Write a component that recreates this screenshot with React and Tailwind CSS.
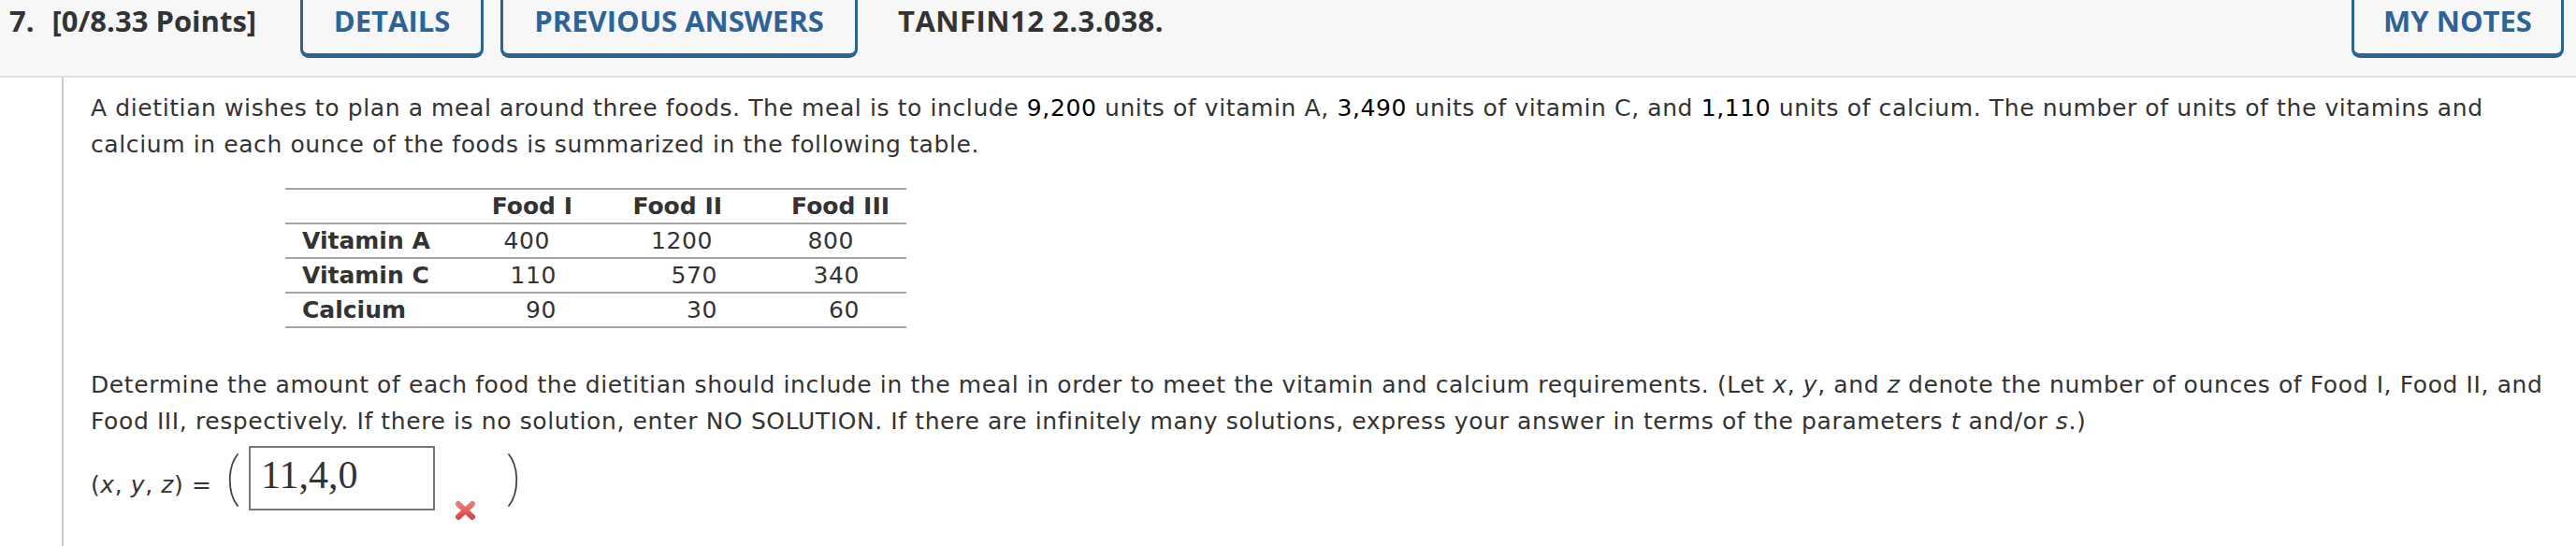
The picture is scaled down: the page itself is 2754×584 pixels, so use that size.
import React from 'react';

const rows = [
  { label: 'Vitamin A', values: ['400', '1200', '800'], pads: ['pr-[42px]', 'pr-[28px]', 'pr-[56px]'] },
  { label: 'Vitamin C', values: ['110', '570', '340'], pads: ['pr-[35px]', 'pr-[23px]', 'pr-[50px]'] },
  { label: 'Calcium', values: ['90', '30', '60'], pads: ['pr-[35px]', 'pr-[23px]', 'pr-[50px]'] },
];

const colWidths = ['w-[120px]', 'w-[160px]', 'w-[179px]'];

function TabButton({ children, width }) {
  return (
    <div
      className={`${width} h-[62px] shrink-0 border-x-[3px] border-b-[5px] border-t-0 border-[#2d6396] rounded-b-[9px] text-center text-[#2d6396] font-bold leading-[45px]`}
    >
      {children}
    </div>
  );
}

function Paren({ flip }) {
  // stretchy bracket, drawn
  return (
    <svg width="14" height="57" viewBox="0 0 14 57" className="shrink-0 mt-[8px]">
      <path
        d={flip ? 'M2 1 C 13 15, 13 42, 2 56' : 'M12 1 C 1 15, 1 42, 12 56'}
        fill="none"
        stroke="#444"
        strokeWidth="1.8"
        strokeLinecap="round"
      />
    </svg>
  );
}

function WrongMark() {
  return (
    <svg width="25" height="22" viewBox="0 0 25 22" className="shrink-0 mt-[58px]">
      <defs>
        <linearGradient id="xg" x1="0" y1="0" x2="0" y2="1">
          <stop offset="0" stopColor="#f07a7a" />
          <stop offset="1" stopColor="#d84848" />
        </linearGradient>
      </defs>
      <path d="M5 4 L20 18 M20 4 L5 18" stroke="url(#xg)" strokeWidth="6" strokeLinecap="round" />
    </svg>
  );
}

export default function App() {
  return (
    <div className="w-[2754px] h-[584px] bg-white overflow-hidden">
      {/* question header */}
      <div className="flex items-start h-[83px] bg-[#f7f7f7] border-b-2 border-[#e0e0e0] pl-[10px] pr-[13px] font-['Open_Sans',sans-serif] text-[31px] text-[#333]">
        <div className="flex w-[311px] shrink-0 font-bold leading-[45px]">
          <span>7.</span>
          <span className="ml-[19px]">[0/8.33 Points]</span>
        </div>
        <TabButton width="w-[196px]">DETAILS</TabButton>
        <div className="ml-[18px]">
          <TabButton width="w-[382px]">PREVIOUS ANSWERS</TabButton>
        </div>
        <div className="ml-[43px] font-bold leading-[45px] tracking-[0.5px]">TANFIN12 2.3.038.</div>
        <div className="ml-auto">
          <TabButton width="w-[227px]">MY NOTES</TabButton>
        </div>
      </div>

      {/* question body */}
      <div className="ml-[66px] h-[501px] border-l-2 border-[#cccccc] pl-[29px] pr-[14px] pt-[13px] font-['DejaVu_Sans',Verdana,sans-serif] text-[25px] tracking-[0.6px] text-[#333]">
        <p className="leading-[39px]">
          A dietitian wishes to plan a meal around three foods. The meal is to include{' '}
          <span className="text-black">9,200</span> units of vitamin A, <span className="text-black">3,490</span> units of
          vitamin C, and <span className="text-black">1,110</span> units of calcium. The number of units of the vitamins and
          calcium in each ounce of the foods is summarized in the following table.
        </p>

        <div className="ml-[208px] mt-[27px] w-[664px] border-t-2 border-[#a6a6a6] leading-[35px]">
          <div className="flex border-b-2 border-[#a6a6a6] font-bold tracking-normal">
            <div className="w-[205px]" />
            {['Food I', 'Food II', 'Food III'].map((h, i) => (
              <div key={h} className={`${colWidths[i]} text-right pr-[18px]`}>
                {h}
              </div>
            ))}
          </div>
          {rows.map((r) => (
            <div key={r.label} className="flex border-b-2 border-[#a6a6a6]">
              <div className="w-[205px] pl-[18px] font-bold tracking-normal">{r.label}</div>
              {r.values.map((v, i) => (
                <div key={i} className={`${colWidths[i]} ${r.pads[i]} text-right`}>
                  {v}
                </div>
              ))}
            </div>
          ))}
        </div>

        <p className="mt-[41px] leading-[39px]">
          Determine the amount of each food the dietitian should include in the meal in order to meet the vitamin and
          calcium requirements. (Let <i>x</i>, <i>y</i>, and <i>z</i> denote the number of ounces of Food I, Food II, and
          Food III, respectively. If there is no solution, enter NO SOLUTION. If there are infinitely many solutions,
          express your answer in terms of the parameters <i>t</i> and/or <i>s</i>.)
        </p>

        <div className="mt-[7px] flex items-start h-[69px]">
          <span className="w-[145px] shrink-0 mt-[28px] leading-[28px] whitespace-nowrap">
            (<i>x</i>, <i>y</i>, <i>z</i>) =
          </span>
          <Paren />
          <div className="ml-[10px] w-[199px] h-[69px] shrink-0 border-2 border-[#777] pl-[11px] pt-[5px] font-['Liberation_Serif',serif] text-[42px] leading-[48px] tracking-normal text-[#333]">
            11,4,0
          </div>
          <div className="ml-[20px]">
            <WrongMark />
          </div>
          <div className="ml-[32px]">
            <Paren flip />
          </div>
        </div>
      </div>
    </div>
  );
}
